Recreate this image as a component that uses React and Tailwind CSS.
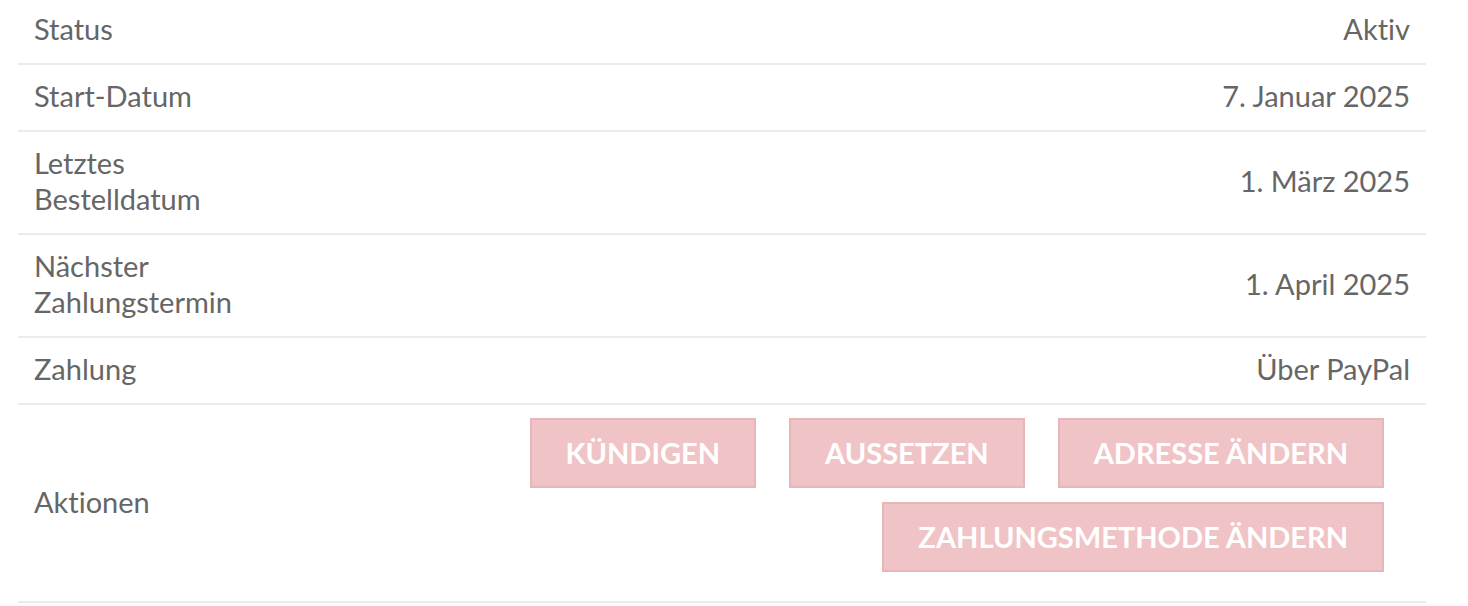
import React from 'react';

const rows = [
  { label: 'Status', value: 'Aktiv' },
  { label: 'Start-Datum', value: '7. Januar 2025' },
  { label: 'Letztes Bestelldatum', value: '1. März 2025' },
  { label: 'Nächster Zahlungstermin', value: '1. April 2025' },
  { label: 'Zahlung', value: 'Über PayPal' },
];

const actions = ['Kündigen', 'Aussetzen', 'Adresse ändern', 'Zahlungsmethode ändern'];

function ActionButton({ children }) {
  return (
    <button className="mb-[14px] border-2 border-[#e8b6b9] bg-[#f0c4c6] px-[34px] py-[15px] text-[29px] font-bold uppercase leading-[36px] text-white">
      {children}
    </button>
  );
}

export default function App() {
  return (
    <div className="min-h-screen bg-white pl-[18px] pr-[42px] pb-4 text-[#666] [font-variant-ligatures:none]" style={{ fontFamily: 'Lato, "Open Sans", sans-serif' }}>
      <div className="-mt-[2px]">
        {rows.map(row => (
          <div key={row.label} className="flex items-center border-b-2 border-[#ebebeb] text-[29px] leading-[36px]">
            <div className="w-[260px] shrink-0 px-4 pt-[13px] pb-[16px]">{row.label}</div>
            <div className="flex-1 px-4 pt-[13px] pb-[16px] text-right">{row.value}</div>
          </div>
        ))}
        <div className="flex items-center border-b-2 border-[#ebebeb] text-[29px] leading-[36px]">
          <div className="w-[260px] shrink-0 px-4 pb-[2px]">Aktionen</div>
          <div className="flex flex-1 flex-wrap justify-end gap-x-[33px] pt-[13px] pb-[15px] pl-4 pr-[42px]">
            {actions.map(a => <ActionButton key={a}>{a}</ActionButton>)}
          </div>
        </div>
      </div>
    </div>
  );
}
